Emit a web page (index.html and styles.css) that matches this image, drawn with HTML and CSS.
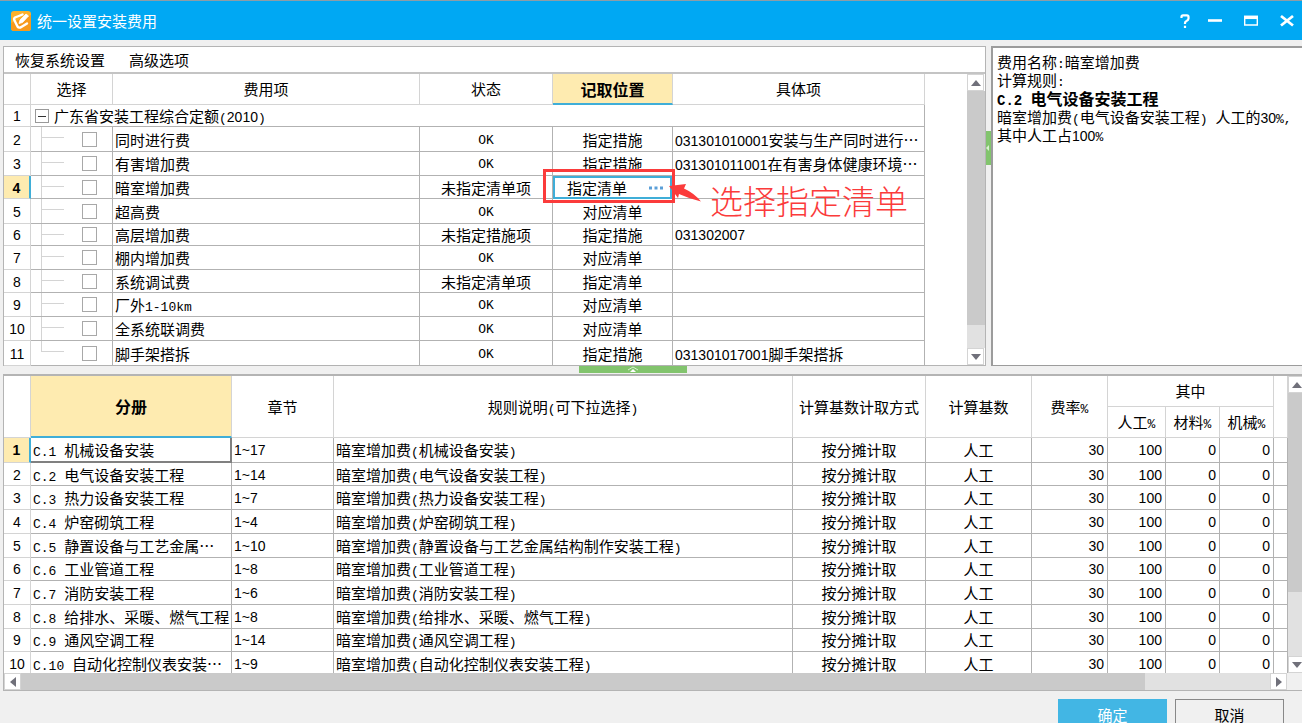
FILE: index.html
```html
<!DOCTYPE html>
<html lang="zh-CN">
<head>
<meta charset="utf-8">
<title>统一设置安装费用</title>
<link rel="stylesheet" href="styles.css">
</head>
<body>
<header class="titlebar">
  <svg class="logo" width="20" height="20" viewBox="0 0 20 20" aria-hidden="true">
    <rect width="20" height="20" rx="3" fill="#fbb12c"/>
    <path d="M0 12L20 4V17Q20 20 17 20H3Q0 20 0 17Z" fill="#f79a1c"/>
    <path d="M11.500 3.500L4 6.500Q2.500 7.500 3.500 9.500L6.500 15.500Q7.500 17 9.500 16.500L16 12.500" fill="none" stroke="#fff" stroke-width="2.400" stroke-linecap="round" stroke-linejoin="round"/>
    <path d="M8 12.500L9 9L15 3L17.500 5L11.500 11.500Z" fill="#fff" stroke="#fff" stroke-width=".8" stroke-linejoin="round"/>
  </svg>
  <h1 class="title">统一设置安装费用</h1>
  <div class="window-buttons">
    <button type="button" aria-label="帮助"><svg width="16" height="16" viewBox="0 0 16 16"><path d="M4.500 5V3.800Q4.500 2.300 6 2.300H10Q11.500 2.300 11.500 3.800V5.500Q11.500 7 9.500 8Q8 8.700 8 10V11M8 12.800V15" fill="none" stroke="#fff" stroke-width="2.200"/></svg></button>
    <button type="button" aria-label="最小化"><svg width="16" height="16" viewBox="0 0 16 16"><path d="M1 7.500H15" stroke="#fff" stroke-width="2.600"/></svg></button>
    <button type="button" aria-label="最大化"><svg width="16" height="16" viewBox="0 0 16 16"><path d="M1.700 4V12H14.300V4" fill="none" stroke="#fff" stroke-width="1.400"/><path d="M1 4.300H15" stroke="#fff" stroke-width="3.500"/></svg></button>
    <button type="button" aria-label="关闭"><svg width="16" height="16" viewBox="0 0 16 16"><path d="M2 3L14 12.500M14 3L2 12.500" stroke="#fff" stroke-width="2.800"/></svg></button>
  </div>
</header>

<main class="main">
  <div class="upper">
    <section class="panel fees">
      <nav class="menubar">
        <button type="button">恢复系统设置</button>
        <button type="button">高级选项</button>
      </nav>
      <div class="fees-body">
        <div class="fees-view">
          <table class="grid fee-table">
            <colgroup><col class="w-num"><col class="w-pick"><col><col class="w-state"><col class="w-place"><col class="w-item"></colgroup>
            <thead><tr><th></th><th>选择</th><th>费用项</th><th>状态</th><th class="active">记取位置</th><th>具体项</th></tr></thead>
            <tbody>
              <tr><th class="n">1</th><td colspan="5" class="root"><div class="root-line"><button type="button" class="toggle" aria-label="折叠"></button><span>广东省安装工程综合定额<span class="m">(</span><span class="n">2010</span><span class="m">)</span></span></div></td></tr>
              <tr><th class="n">2</th><td class="tree"><input type="checkbox" aria-label="同时进行费"></td><td>同时进行费</td><td class="c m">OK</td><td class="c">指定措施</td><td><span class="n">031301010001</span>安装与生产同时进行…</td></tr>
              <tr><th class="n">3</th><td class="tree"><input type="checkbox" aria-label="有害增加费"></td><td>有害增加费</td><td class="c m">OK</td><td class="c">指定措施</td><td><span class="n">031301011001</span>在有害身体健康环境…</td></tr>
              <tr><th class="n current">4</th><td class="tree"><input type="checkbox" aria-label="暗室增加费"></td><td>暗室增加费</td><td class="c">未指定清单项</td>
                <td class="editing"><div class="editor"><span>指定清单</span><button type="button" class="more" aria-label="选择清单"><svg width="14" height="4" viewBox="0 0 14 4"><path d="M0 .5h3v3H0zM5.500 .5h3v3h-3zM11 .5h3v3h-3z" fill="#5b9fd8"/></svg></button></div>
                  <div class="callout-box"></div>
                  <div class="callout"><svg width="32" height="18" viewBox="0 0 32 18" aria-hidden="true"><path d="M0 2L17 0L15 4.500Q25 9 32 17.500Q21 15 10 10L9 14Z" fill="#fb3b3b"/></svg><span>选择指定清单</span></div></td><td></td></tr>
              <tr><th class="n">5</th><td class="tree"><input type="checkbox" aria-label="超高费"></td><td>超高费</td><td class="c m">OK</td><td class="c">对应清单</td><td></td></tr>
              <tr><th class="n">6</th><td class="tree"><input type="checkbox" aria-label="高层增加费"></td><td>高层增加费</td><td class="c">未指定措施项</td><td class="c">指定措施</td><td class="n">031302007</td></tr>
              <tr><th class="n">7</th><td class="tree"><input type="checkbox" aria-label="棚内增加费"></td><td>棚内增加费</td><td class="c m">OK</td><td class="c">对应清单</td><td></td></tr>
              <tr><th class="n">8</th><td class="tree"><input type="checkbox" aria-label="系统调试费"></td><td>系统调试费</td><td class="c">未指定清单项</td><td class="c">指定清单</td><td></td></tr>
              <tr><th class="n">9</th><td class="tree"><input type="checkbox" aria-label="厂外1-10km"></td><td>厂外<span class="m">1-10km</span></td><td class="c m">OK</td><td class="c">对应清单</td><td></td></tr>
              <tr><th class="n">10</th><td class="tree"><input type="checkbox" aria-label="全系统联调费"></td><td>全系统联调费</td><td class="c m">OK</td><td class="c">对应清单</td><td></td></tr>
              <tr><th class="n">11</th><td class="tree last"><input type="checkbox" aria-label="脚手架搭拆"></td><td>脚手架搭拆</td><td class="c m">OK</td><td class="c">指定措施</td><td><span class="n">031301017001</span>脚手架搭拆</td></tr>
            </tbody>
          </table>
        </div>
        <div class="vbar">
          <button type="button" class="arrow" aria-label="向上"><svg width="10" height="6" viewBox="0 0 10 6"><path d="M0 6L5 0L10 6Z"/></svg></button>
          <div class="thumb"></div><div class="track"></div>
          <button type="button" class="arrow" aria-label="向下"><svg width="10" height="6" viewBox="0 0 10 6"><path d="M0 0L5 6L10 0Z"/></svg></button>
        </div>
      </div>
    </section>
    <div class="split-v"><div class="grip-v"><svg width="3" height="6" viewBox="0 0 3 6"><path d="M0 3L3 0V6Z" fill="#d8f0d0"/></svg></div></div>
    <aside class="info">
      <p>费用名称<span class="m">:</span>暗室增加费</p>
      <p>计算规则<span class="m">:</span></p>
      <p class="strong"><span class="m">C.2 </span>电气设备安装工程</p>
      <p>暗室增加费<span class="m">(</span>电气设备安装工程<span class="m">) </span>人工的<span class="n">30</span><span class="m">%,</span></p>
      <p>其中人工占<span class="n">100</span><span class="m">%</span></p>
    </aside>
  </div>

  <div class="split-h"><div class="grip-h"><svg width="12" height="6" viewBox="0 0 12 6"><path d="M1 4L6 1L11 4" fill="none" stroke="#d8f0d0"/><path d="M3 6L6 3L9 6Z" fill="#fff"/></svg></div></div>

  <section class="panel rules">
    <div class="rules-row">
      <div class="rules-view">
        <table class="grid rule-table">
          <colgroup><col class="w-num"><col class="w-book"><col class="w-chapter"><col><col class="w-mode"><col class="w-base"><col class="w-rate"><col class="w-labor"><col class="w-part"><col class="w-part"><col class="w-rest"></colgroup>
          <thead>
            <tr><th rowspan="2"></th><th rowspan="2" class="active">分册</th><th rowspan="2">章节</th><th rowspan="2">规则说明<span class="m">(</span>可下拉选择<span class="m">)</span></th><th rowspan="2">计算基数计取方式</th><th rowspan="2">计算基数</th><th rowspan="2">费率<span class="m">%</span></th><th colspan="3">其中</th><th rowspan="2"></th></tr>
            <tr><th>人工<span class="m">%</span></th><th>材料<span class="m">%</span></th><th>机械<span class="m">%</span></th></tr>
          </thead>
          <tbody>
            <tr><th class="n current">1</th><td class="focus"><span class="m">C.1 </span>机械设备安装</td><td class="n">1~17</td><td>暗室增加费<span class="m">(</span>机械设备安装<span class="m">)</span></td><td class="c">按分摊计取</td><td class="c">人工</td><td class="r n">30</td><td class="r n">100</td><td class="r n">0</td><td class="r n">0</td><td></td></tr>
            <tr><th class="n">2</th><td><span class="m">C.2 </span>电气设备安装工程</td><td class="n">1~14</td><td>暗室增加费<span class="m">(</span>电气设备安装工程<span class="m">)</span></td><td class="c">按分摊计取</td><td class="c">人工</td><td class="r n">30</td><td class="r n">100</td><td class="r n">0</td><td class="r n">0</td><td></td></tr>
            <tr><th class="n">3</th><td><span class="m">C.3 </span>热力设备安装工程</td><td class="n">1~7</td><td>暗室增加费<span class="m">(</span>热力设备安装工程<span class="m">)</span></td><td class="c">按分摊计取</td><td class="c">人工</td><td class="r n">30</td><td class="r n">100</td><td class="r n">0</td><td class="r n">0</td><td></td></tr>
            <tr><th class="n">4</th><td><span class="m">C.4 </span>炉窑砌筑工程</td><td class="n">1~4</td><td>暗室增加费<span class="m">(</span>炉窑砌筑工程<span class="m">)</span></td><td class="c">按分摊计取</td><td class="c">人工</td><td class="r n">30</td><td class="r n">100</td><td class="r n">0</td><td class="r n">0</td><td></td></tr>
            <tr><th class="n">5</th><td><span class="m">C.5 </span>静置设备与工艺金属…</td><td class="n">1~10</td><td>暗室增加费<span class="m">(</span>静置设备与工艺金属结构制作安装工程<span class="m">)</span></td><td class="c">按分摊计取</td><td class="c">人工</td><td class="r n">30</td><td class="r n">100</td><td class="r n">0</td><td class="r n">0</td><td></td></tr>
            <tr><th class="n">6</th><td><span class="m">C.6 </span>工业管道工程</td><td class="n">1~8</td><td>暗室增加费<span class="m">(</span>工业管道工程<span class="m">)</span></td><td class="c">按分摊计取</td><td class="c">人工</td><td class="r n">30</td><td class="r n">100</td><td class="r n">0</td><td class="r n">0</td><td></td></tr>
            <tr><th class="n">7</th><td><span class="m">C.7 </span>消防安装工程</td><td class="n">1~6</td><td>暗室增加费<span class="m">(</span>消防安装工程<span class="m">)</span></td><td class="c">按分摊计取</td><td class="c">人工</td><td class="r n">30</td><td class="r n">100</td><td class="r n">0</td><td class="r n">0</td><td></td></tr>
            <tr><th class="n">8</th><td><span class="m">C.8 </span>给排水、采暖、燃气工程</td><td class="n">1~8</td><td>暗室增加费<span class="m">(</span>给排水、采暖、燃气工程<span class="m">)</span></td><td class="c">按分摊计取</td><td class="c">人工</td><td class="r n">30</td><td class="r n">100</td><td class="r n">0</td><td class="r n">0</td><td></td></tr>
            <tr><th class="n">9</th><td><span class="m">C.9 </span>通风空调工程</td><td class="n">1~14</td><td>暗室增加费<span class="m">(</span>通风空调工程<span class="m">)</span></td><td class="c">按分摊计取</td><td class="c">人工</td><td class="r n">30</td><td class="r n">100</td><td class="r n">0</td><td class="r n">0</td><td></td></tr>
            <tr><th class="n">10</th><td><span class="m">C.10 </span>自动化控制仪表安装…</td><td class="n">1~9</td><td>暗室增加费<span class="m">(</span>自动化控制仪表安装工程<span class="m">)</span></td><td class="c">按分摊计取</td><td class="c">人工</td><td class="r n">30</td><td class="r n">100</td><td class="r n">0</td><td class="r n">0</td><td></td></tr>
          </tbody>
        </table>
      </div>
      <div class="vbar">
        <button type="button" class="arrow" aria-label="向上"><svg width="10" height="6" viewBox="0 0 10 6"><path d="M0 6L5 0L10 6Z"/></svg></button>
        <div class="thumb"></div><div class="track"></div>
        <button type="button" class="arrow" aria-label="向下"><svg width="10" height="6" viewBox="0 0 10 6"><path d="M0 0L5 6L10 0Z"/></svg></button>
      </div>
    </div>
    <div class="hbar">
      <button type="button" class="arrow" aria-label="向左"><svg width="6" height="10" viewBox="0 0 6 10"><path d="M6 0L0 5L6 10Z"/></svg></button>
      <div class="thumb"></div><div class="track"></div>
      <button type="button" class="arrow" aria-label="向右"><svg width="6" height="10" viewBox="0 0 6 10"><path d="M0 0L6 5L0 10Z"/></svg></button>
    </div>
  </section>
</main>

<footer class="footer">
  <button type="button" class="btn primary">确定</button>
  <button type="button" class="btn">取消</button>
</footer>
</body>
</html>
```

FILE: styles.css
```css
* { box-sizing: border-box; }

html, body { height: 100%; }

body {
  margin: 0;
  overflow: hidden;
  background: #f0f0f0;
  color: #000;
  font: 15px/20px "Noto Sans CJK SC", sans-serif;
}

button {
  margin: 0;
  padding: 0;
  border: 0;
  background: none;
  color: inherit;
  font: inherit;
}

svg { display: block; }

/* half-width characters inside the text */
.m { font-family: "Liberation Mono", monospace; font-size: 13px; line-height: 1; white-space: pre; }
.n { font-family: "Liberation Sans", sans-serif; font-size: 14px; line-height: 1; }

/* title bar */
.titlebar {
  display: flex;
  align-items: center;
  height: 40px;
  padding: 0 7px 0 11px;
  border-top: 1px solid #8d9da6;
  background: #00a8f3;
  color: #fff;
}
.title { flex: 1; margin: 0 0 0 6px; font-size: 15px; font-weight: 400; }
.window-buttons { display: flex; gap: 20px; }
.window-buttons button:first-child { margin-right: -6px; }

.main { padding: 6px 0 0 3px; }

.upper { display: flex; height: 320px; }

.panel { border: 1px solid #b4b4b4; background: #fff; }

.fees { flex: 1; min-width: 0; display: flex; flex-direction: column; }

.menubar {
  display: flex;
  gap: 24px;
  height: 27px;
  padding: 0 11px;
  border-bottom: 2px solid #c4c4c4;
}

.fees-body { flex: 1; display: flex; min-height: 0; }
.fees-view { flex: 1; min-width: 0; padding-right: 42px; }

/* grids */
.grid {
  width: 100%;
  table-layout: fixed;
  border-collapse: separate;
  border-spacing: 0;
}
.grid th, .grid td {
  padding: 0 2px;
  border-right: 1px solid #b2b2b2;
  border-bottom: 1px solid #b2b2b2;
  line-height: 20px;
  font-weight: 400;
  text-align: left;
  white-space: nowrap;
}
.grid tbody td, .grid tbody th { padding-top: 1px; }
.grid tbody td.m { padding-top: 3px; }
.grid th { padding: 0; border-color: #d4d4d4; text-align: center; }
.grid .c { text-align: center; }
.grid .r { padding-right: 3px; text-align: right; }
.grid th.active {
  border-bottom: 2px solid #3faed8;
  background: #feebb0;
  font-size: 16px;
  font-weight: 700;
}
.grid th.current {
  border-right: 2px solid #3faed8;
  background: #feebb0;
  font-weight: 700;
}

.fee-table { height: 292px; }
.fee-table thead { height: 31px; }
.w-num { width: 27px; }
.w-pick { width: 82px; }
.w-state { width: 133px; }
.w-place { width: 120px; }
.w-item { width: 252px; }

.root-line { display: flex; align-items: center; gap: 5px; padding-left: 2px; }
.toggle {
  width: 14px;
  height: 14px;
  border: 1px solid #999;
  background: linear-gradient(#333, #333) center / 8px 1px no-repeat;
}

.grid tbody .tree {
  padding-top: 0;
  padding-left: 51px;
  background:
    linear-gradient(#d4d4d4, #d4d4d4) 10px 0 / 1px 100% no-repeat,
    linear-gradient(#d4d4d4, #d4d4d4) 11px 10px / 22px 1px no-repeat;
}
.grid tbody .tree.last {
  background:
    linear-gradient(#d4d4d4, #d4d4d4) 10px 0 / 1px 10px no-repeat,
    linear-gradient(#d4d4d4, #d4d4d4) 10px 10px / 23px 1px no-repeat;
}
.tree input {
  display: block;
  width: 15px;
  height: 15px;
  margin: 0;
  appearance: none;
  border: 1px solid #a8a8a8;
  background: #fff;
}

.grid tbody .editing { position: relative; padding: 0; border-bottom: 0; }
.editor {
  display: flex;
  align-items: center;
  justify-content: space-between;
  height: 23px;
  padding: 0 7px 0 12px;
  border: 2px solid #3faed8;
}

/* annotation laid over the grid */
.callout-box {
  position: absolute;
  z-index: 1;
  left: -10px;
  top: -7px;
  width: 132px;
  height: 34px;
  border: 3px solid #fb3b3b;
}
.callout {
  position: absolute;
  z-index: 2;
  left: 116px;
  top: 8px;
  display: flex;
  gap: 9px;
  color: #fb3b3b;
  font-size: 33px;
  font-weight: 300;
  line-height: 32px;
}

/* scroll bars */
.vbar { display: flex; flex-direction: column; flex: none; width: 18px; }
.hbar { display: flex; height: 17px; padding-right: 15px; background: #f0f0f0; }
.arrow {
  display: flex;
  align-items: center;
  justify-content: center;
  flex: none;
  width: 17px;
  height: 17px;
  border: 1px solid #d4d4d4;
  background: #fff;
}
.arrow svg { fill: #70707a; }
.thumb { background: #cacaca; }
.track { flex: 1; background: #e1e1e1; }
.fees .thumb { height: 234px; }
.rules .vbar { width: 14px; }
.rules .vbar .thumb { height: 199px; }
.hbar .thumb { flex: 9; }

/* splitters */
.split-v { display: flex; align-items: center; width: 5px; padding-bottom: 116px; }
.grip-v {
  display: flex;
  align-items: center;
  width: 5px;
  height: 34px;
  background: #82c46d;
}
.split-h { display: flex; justify-content: center; height: 8px; padding-right: 39px; }
.grip-h {
  display: flex;
  justify-content: center;
  width: 108px;
  height: 7px;
  background: #82c46d;
}

.info {
  width: 311px;
  padding: 5px 4px;
  border: 2px solid #9c9c9c;
  border-right: 0;
  border-bottom-width: 1px;
  background: #fff;
}
.info p { margin: 0; line-height: 18px; white-space: nowrap; }
.info .strong { font-size: 16px; font-weight: 700; }
.info .strong .m { font-size: 14px; }

/* rules grid */
.rules { border-top-width: 2px; border-right: 0; }
.rules-row { display: flex; height: 297px; }
.rules-view { flex: 1; min-width: 0; overflow: hidden; }
.rule-table { height: 300px; }
.rule-table thead tr { height: 31px; }
.w-book { width: 201px; }
.w-chapter { width: 102px; }
.w-mode { width: 133px; }
.w-base { width: 106px; }
.w-rate { width: 76px; }
.w-labor { width: 58px; }
.w-part { width: 54px; }
.w-rest { width: 14px; }
.grid tbody .focus {
  border-right: 2px solid #808080;
  border-bottom: 2px solid #808080;
}

.footer { display: flex; justify-content: flex-end; gap: 8px; padding: 8px 18px 0 0; }
.btn { width: 109px; height: 32px; border: 1px solid #888; }
.primary { border-color: #42b6e4; background: #42b6e4; color: #fff; }
```
